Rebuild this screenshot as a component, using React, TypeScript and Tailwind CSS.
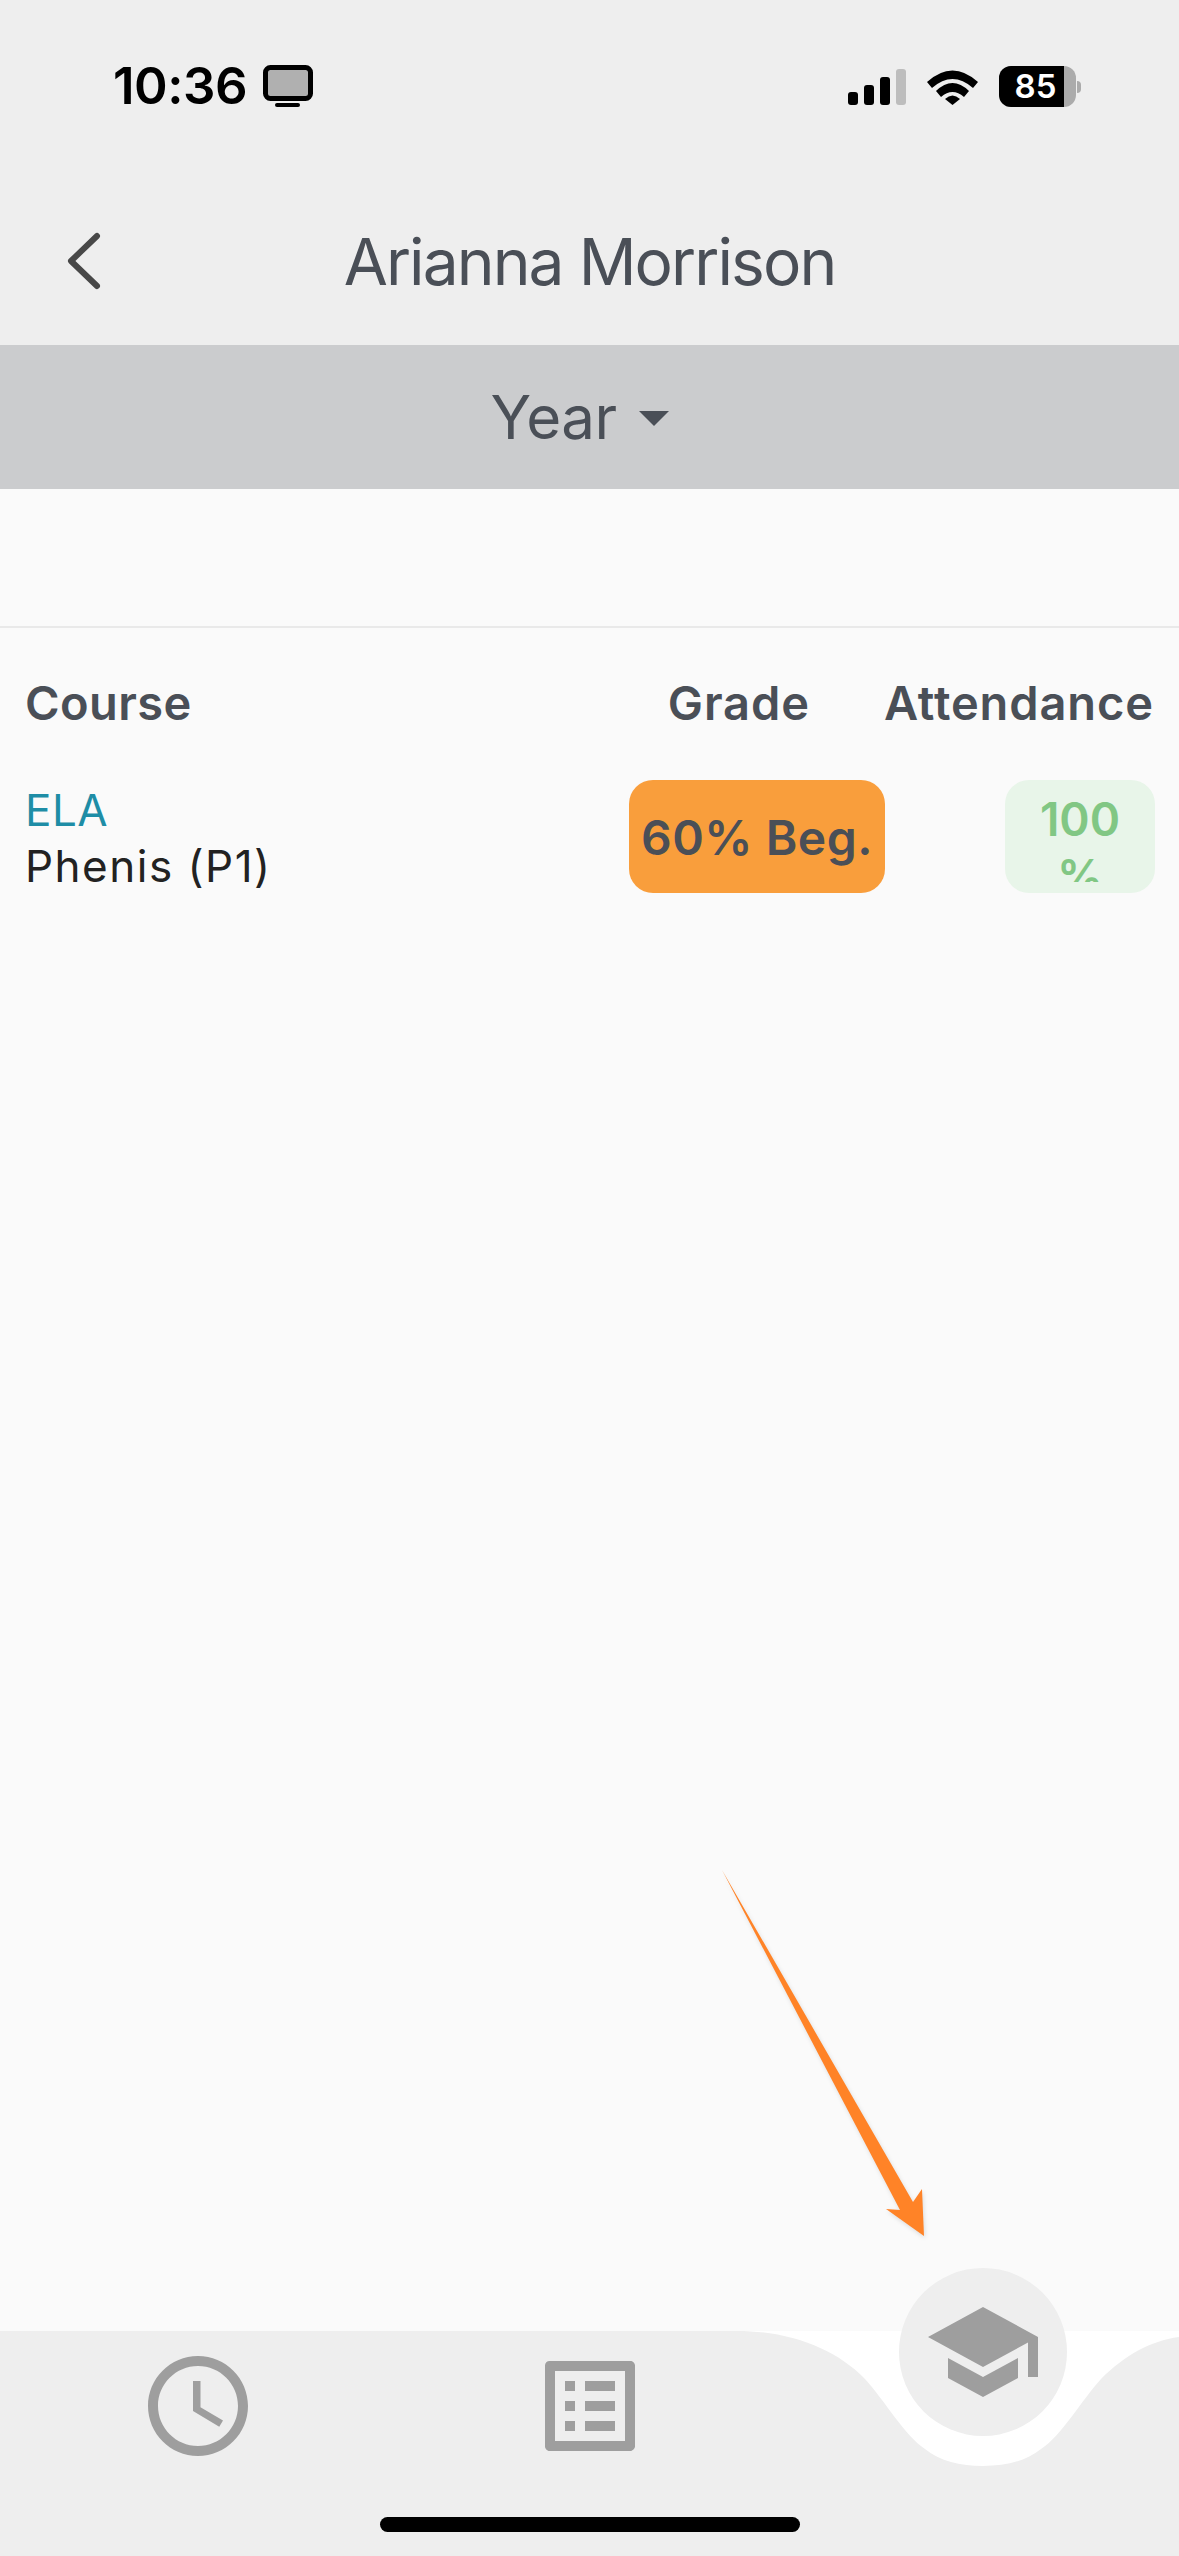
const FONT = "font-['Inter','Liberation_Sans',sans-serif]";

function StatusBar() {
  return (
    <div className="flex h-[112px] items-end justify-between pl-[113px] pr-[98px]">
      <div className="flex items-center gap-[16px] pb-[3px]">
        <span className="text-[51px] leading-[46px] font-semibold tracking-[-0.5px] text-black">10:36</span>
        <svg width="50" height="42" viewBox="0 0 50 42">
          <rect x="2.500" y="2.500" width="45" height="31" rx="5" fill="#b0b0b0" stroke="#000" strokeWidth="5" />
          <rect x="12" y="38" width="25" height="4" rx="2" fill="#000" />
        </svg>
      </div>
      <div className="flex items-center gap-[21px] pb-[5px]">
        <svg width="58" height="36" viewBox="0 0 58 36">
          <rect x="0" y="23" width="10" height="13" rx="3" fill="#000" />
          <rect x="16" y="16" width="10" height="20" rx="3" fill="#000" />
          <rect x="32" y="8" width="10" height="28" rx="3" fill="#000" />
          <rect x="48" y="0" width="10" height="36" rx="3" fill="#bdbdbd" />
        </svg>
        <svg width="51" height="37" viewBox="0 0 51 37">
          <path d="M0 14 Q25.500 -9 51 14 L46 20 Q25.500 2 5 20 Z" fill="#000" />
          <path d="M9 23 Q25.500 7 42 23 L37 29 Q25.500 19 14 29 Z" fill="#000" />
          <path d="M18 31 Q25.500 24 33 31 L25.500 37 Z" fill="#000" />
        </svg>
        <div className="flex items-center">
          <div className="flex h-[41px] w-[77px] overflow-hidden rounded-[12px] bg-[#ababab]">
            <div className="flex w-[65px] items-center justify-center bg-black pl-[8px] text-[33px] font-semibold leading-none text-white">
              85
            </div>
          </div>
          <div className="ml-[1px] h-[12px] w-[4px] rounded-r-full bg-[#ababab]" />
        </div>
      </div>
    </div>
  );
}

function TopBar() {
  return (
    <header className="h-[345px] bg-[#eeeeee]">
      <StatusBar />
      <div className="relative mt-[74px] flex h-[152px] items-center justify-center">
        <svg width="44" height="60" viewBox="0 0 44 60" className="absolute left-[62px] top-[45px]">
          <path d="M35 5 L9 30 L35 55" fill="none" stroke="#484848" strokeWidth="6" strokeLinecap="round" strokeLinejoin="round" />
        </svg>
        <h1 className="text-[64px] leading-none font-normal tracking-[-1.900px] text-[#4a4f57]">Arianna Morrison</h1>
      </div>
    </header>
  );
}

function YearBar() {
  return (
    <div className="flex h-[144px] items-center justify-center bg-[#cbccce] pr-[18px]">
      <span className="text-[60px] leading-none tracking-[-0.500px] text-[#4a4f57]">Year</span>
      <svg width="72" height="72" viewBox="0 0 24 24" className="ml-[2px] -mr-[20px]">
        <path d="M7 10l5 5 5-5z" fill="#4a4f57" />
      </svg>
    </div>
  );
}

function CourseTable() {
  return (
    <div>
      <div className="flex h-[98px] items-end text-[47px] leading-none font-semibold tracking-[0.900px] text-[#4a4f57]">
        <span className="flex-1 pl-[25px] tracking-[0.400px]">Course</span>
        <span>Grade</span>
        <span className="ml-[74px] pr-[25px]">Attendance</span>
      </div>
      <div className="mt-[54px] flex h-[113px] items-center pr-[24px]">
        <div className="flex-1 pl-[25px] pt-[2px] text-[44px] leading-[56px] text-[#222222]">
          <div className="tracking-[0.500px] text-[#1e8da6]">ELA</div>
          <div className="tracking-[1.500px]">Phenis (P1)</div>
        </div>
        <div className="flex h-full w-[256px] items-center justify-center rounded-[24px] bg-[#f99e3c] pt-[2px] text-[48px] font-semibold tracking-[0.500px] text-[#4a4f57]">
          60% Beg.
        </div>
        <div className="ml-[120px] h-full w-[150px] overflow-hidden rounded-[24px] bg-[#e8f5e9] pt-[11px] text-center text-[46px] font-semibold leading-[57px] text-[#81c784]">
          <div className="h-[91px] overflow-hidden">
            <div>100</div>
            <div>%</div>
          </div>
        </div>
      </div>
    </div>
  );
}

function BottomNav() {
  return (
    <footer className="relative h-[225px] bg-white">
      <svg width="1179" height="225" viewBox="0 0 1179 225" className="absolute inset-0">
        <path
          d="M0 0 H737 C790 0 836 18 865 48 C885 70 905 105 925 118 C940 130 960 135 983 135 C1006 135 1026 130 1041 118 C1061 105 1081 70 1101 48 C1125 24 1150 10 1179 6 V225 H0 Z"
          fill="#eeeeee"
        />
      </svg>
      <div className="relative grid grid-cols-3 pt-[15px]">
        <div className="flex justify-center pl-[2px]">
          <svg width="120" height="120" viewBox="0 0 24 24" fill="#9e9e9e">
            <path d="M11.990 2C6.470 2 2 6.480 2 12s4.470 10 9.990 10C17.520 22 22 17.520 22 12S17.520 2 11.990 2zM12 20c-4.420 0-8-3.580-8-8s3.580-8 8-8 8 3.580 8 8-3.580 8-8 8z" />
            <path d="M12.500 7H11v6l5.250 3.150.75-1.230-4.500-2.670z" />
          </svg>
        </div>
        <div className="flex justify-center">
          <svg width="120" height="120" viewBox="0 0 24 24" fill="#9e9e9e">
            <path d="M19 5v14H5V5h14m1.100-2H3.900c-.5 0-.9.4-.9.9v16.200c0 .4.4.9.9.9h16.200c.4 0 .9-.5.9-.9V3.900c0-.5-.5-.9-.9-.9zM11 7h6v2h-6V7zm0 4h6v2h-6v-2zm0 4h6v2h-6zM7 7h2v2H7zm0 4h2v2H7zm0 4h2v2H7z" />
          </svg>
        </div>
      </div>
      <div className="absolute left-[899px] top-[-63px] flex h-[168px] w-[168px] items-center justify-center rounded-full bg-[#eeeeee]">
        <svg width="120" height="120" viewBox="0 0 24 24" fill="#9e9e9e">
          <path d="M5 13.180v4L12 21l7-3.820v-4L12 17l-7-3.820zM12 3L1 9l11 6 9-4.910V17h2V9L12 3z" />
        </svg>
      </div>
      <div className="absolute left-[380px] top-[186px] h-[15px] w-[420px] rounded-full bg-black" />
    </footer>
  );
}

export default function App() {
  return (
    <div className={`relative flex h-[2556px] w-[1179px] flex-col overflow-hidden bg-[#fafafa] ${FONT}`}>
      <TopBar />
      <YearBar />
      <main className="flex-1">
        <div className="h-[139px] border-b-2 border-[#e9e9e9]" />
        <CourseTable />
      </main>
      <BottomNav />
      <svg width="1179" height="2556" viewBox="0 0 1179 2556" className="pointer-events-none absolute inset-0 drop-shadow-[1px_2px_2px_rgba(0,0,0,0.12)]">
        <path d="M722 1870 L913 2202 L922 2189 L924 2236 L886 2209 L900 2210 Z" fill="#ff8327" />
      </svg>
    </div>
  );
}
